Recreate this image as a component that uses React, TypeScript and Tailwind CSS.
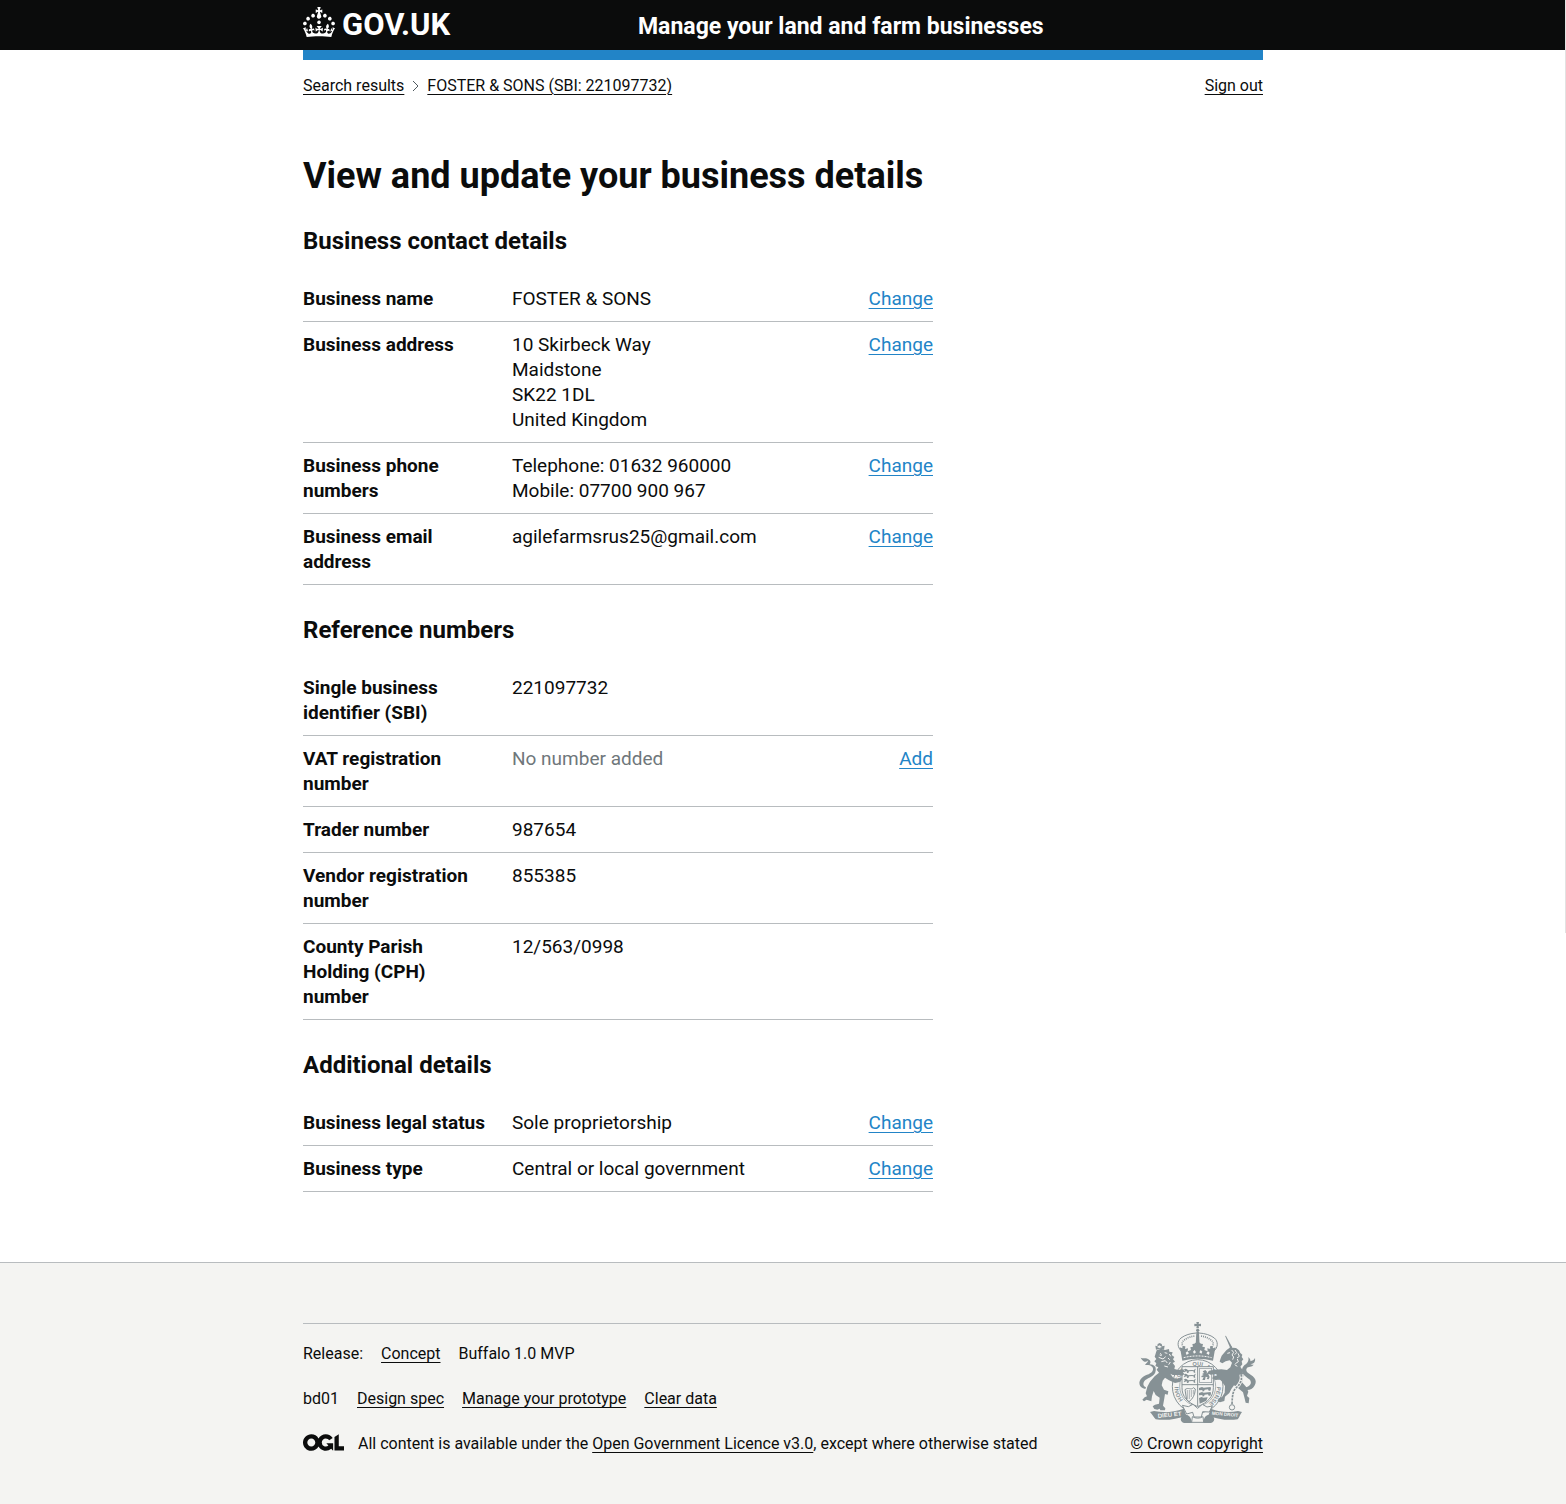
import React from "react";

type Action = "Change" | "Add";
type Row = { label: string; lines: string[]; action?: Action; muted?: boolean };
type Section = { title: string; rows: Row[] };

const sections: Section[] = [
  {
    title: "Business contact details",
    rows: [
      { label: "Business name", lines: ["FOSTER & SONS"], action: "Change" },
      {
        label: "Business address",
        lines: ["10 Skirbeck Way", "Maidstone", "SK22 1DL", "United Kingdom"],
        action: "Change",
      },
      {
        label: "Business phone numbers",
        lines: ["Telephone: 01632 960000", "Mobile: 07700 900 967"],
        action: "Change",
      },
      { label: "Business email address", lines: ["agilefarmsrus25@gmail.com"], action: "Change" },
    ],
  },
  {
    title: "Reference numbers",
    rows: [
      { label: "Single business identifier (SBI)", lines: ["221097732"] },
      { label: "VAT registration number", lines: ["No number added"], action: "Add", muted: true },
      { label: "Trader number", lines: ["987654"] },
      { label: "Vendor registration number", lines: ["855385"] },
      { label: "County Parish Holding (CPH) number", lines: ["12/563/0998"] },
    ],
  },
  {
    title: "Additional details",
    rows: [
      { label: "Business legal status", lines: ["Sole proprietorship"], action: "Change" },
      { label: "Business type", lines: ["Central or local government"], action: "Change" },
    ],
  },
];

const mottoWords = [
  { word: "HONI", offset: "19%" },
  { word: "SOIT", offset: "34%" },
  { word: "QUI", offset: "50%" },
  { word: "MAL Y", offset: "64%" },
  { word: "PENSE", offset: "83%" },
];

function TextLink({ children, label }: { children: React.ReactNode; label?: string }) {
  return (
    <a href="#" aria-label={label} className="underline decoration-1 underline-offset-3 hover:decoration-2">
      {children}
    </a>
  );
}

function Crown() {
  return (
    <svg viewBox="0 0 32 30" className="h-[30px] w-8 shrink-0" fill="currentColor" aria-hidden="true">
      <path d="M22.6 10.4c-1 .4-2-.1-2.4-1-.4-.9.1-2 1-2.4.9-.4 2 .1 2.4 1s-.1 2-1 2.4m-5.9 6.7c-.9.4-2-.1-2.4-1-.4-.9.1-2 1-2.4.9-.4 2 .1 2.4 1s-.1 2-1 2.4m10.8-3.7c-1 .4-2-.1-2.4-1-.4-.9.1-2 1-2.4.9-.4 2 .1 2.4 1s0 2-1 2.4m3.3 4.8c-1 .4-2-.1-2.4-1-.4-.9.1-2 1-2.4.9-.4 2 .1 2.4 1s-.1 2-1 2.4M17 4.7l2.3 1.2V2.5l-2.3.7-.2-.2.9-3h-3.4l.9 3-.2.2c-.1.1-2.3-.7-2.3-.7v3.4L15 4.7c.1.1.1.2.2.2l-1.3 4c-.1.2-.1.4-.1.6 0 1.1.8 2 1.9 2.2h.7c1-.2 1.9-1.1 1.9-2.1 0-.2 0-.4-.1-.6l-1.3-4c-.1-.2 0-.2.1-.3m-7.6 5.7c.9.4 2-.1 2.4-1 .4-.9-.1-2-1-2.4-.9-.4-2 .1-2.4 1s0 2 1 2.4m-5 3c.9.4 2-.1 2.4-1 .4-.9-.1-2-1-2.4-.9-.4-2 .1-2.4 1s.1 2 1 2.4m-3.2 4.8c.9.4 2-.1 2.4-1 .4-.9-.1-2-1-2.4-.9-.4-2 .1-2.4 1s0 2 1 2.4m14.8 11c4.4 0 8.6.3 12.3.8 1.1-4.5 2.4-7 3.7-8.8l-2.5-.9c.2 1.3.3 1.9 0 2.7-.4-.4-.8-1.1-1.1-2.3l-1.2 4c.7-.5 1.3-.8 2-.9-1.1 2.5-2.6 3.1-3.5 3-1.1-.2-1.7-1.2-1.5-2.1.3-1.2 1.5-1.5 2.1-.1 1.1-2.3-.8-3-2-2.3 1.9-1.9 2.1-3.5.6-5.6-2.1 1.6-2.1 3.2-1.2 5.5-1.2-1.4-3.2-.6-2.5 1.6.9-1.4 2.1-.5 1.9.8-.2 1.1-1.7 2.1-3.5 1.9-2.7-.2-2.9-2.1-2.9-3.6.7-.1 1.9.5 2.9 1.9l.4-4.3c-1.1 1.1-2.1 1.4-3.2 1.4.4-1.2 2.1-3 2.1-3h-5.4s1.7 1.9 2.1 3c-1.1 0-2.1-.2-3.2-1.4l.4 4.3c1-1.4 2.2-2 2.9-1.9-.1 1.5-.2 3.4-2.9 3.6-1.9.2-3.4-.8-3.5-1.9-.2-1.3 1-2.2 1.9-.8.7-2.3-1.2-3-2.5-1.6.9-2.2.9-3.9-1.2-5.5-1.5 2-1.3 3.7.6 5.6-1.2-.7-3.1 0-2 2.3.6-1.4 1.8-1.1 2.1.1.2.9-.3 1.9-1.5 2.1-.9.2-2.4-.5-3.5-3 .6 0 1.2.3 2 .9l-1.2-4c-.3 1.1-.7 1.9-1.1 2.3-.3-.8-.2-1.4 0-2.7l-2.9.9C1.3 23 2.6 25.5 3.7 30c3.7-.5 7.9-.8 12.3-.8" />
    </svg>
  );
}

function OglLogo() {
  return (
    <svg viewBox="0 0 483 196" className="h-[17px] w-[41px] shrink-0" fill="currentColor" aria-hidden="true">
      <path d="M421.5 142.8V.1l-50.7 32.3v161.1h112.4v-50.7zm-122.3-9.6A47.12 47.12 0 0 1 221 97.8c0-26 21.1-47.1 47.1-47.1 16.7 0 31.4 8.7 39.7 21.8l42.7-27.2A97.63 97.63 0 0 0 268.1 0c-36.5 0-68.3 20.1-85.1 49.7A98 98 0 0 0 97.8 0C43.9 0 0 43.9 0 97.8s43.9 97.8 97.8 97.8c36.5 0 68.3-20.1 85.1-49.7a97.76 97.76 0 0 0 149.6 25.4l19.4 22.2h3v-87.8h-80l24.3 27.5zM97.8 145c-26 0-47.1-21.1-47.1-47.1s21.1-47.1 47.1-47.1 47.1 21.1 47.1 47.1S123.8 145 97.8 145" />
    </svg>
  );
}

function PassantLions({ x, y }: { x: number; y: number }) {
  return (
    <g transform={`translate(${x} ${y})`}>
      {[0, 15, 30].map((dy) => (
        <path
          key={dy}
          transform={`translate(0 ${dy})`}
          d="M2 4l5-3 5 2 3 3 12-1 6 1 3-5 2 1-2 6 1 5h-5l1-3-5-2-10 1-2 5h-5l2-4-4-1-4 3-3-2 4-3z"
        />
      ))}
    </g>
  );
}

function RoyalArms() {
  return (
    <svg viewBox="39 33 360 309" className="-mt-0.5 h-[103px] w-30" fill="#869195" stroke="none" aria-hidden="true">
      {/* crown */}
      <path d="M217 36h8l-1 6 7-1v8l-7-1 1 7h-8l1-7-7 1v-8l7 1z" />
      <circle cx="221" cy="61" r="5" />
      <path d="M217 66h8l2 42h-12z" />
      <g fill="none" stroke="#869195">
        <path d="M173 124c-14-12-14-30-2-40 12-9 28-14 46-15" strokeWidth="3" />
        <path d="M269 124c14-12 14-30 2-40-12-9-28-14-46-15" strokeWidth="3" />
        <path d="M182 116c-10-9-10-20-1-26 9-7 20-11 32-12" strokeWidth="5" strokeDasharray="3 3" />
        <path d="M260 116c10-9 10-20 1-26-9-7-20-11-32-12" strokeWidth="5" strokeDasharray="3 3" />
      </g>
      <path d="M170 124l-3-12 8 3 2-7 7 1-1 8 9-2-1 9 10-4-2-8 8-2-2-8 6-1 10-7 10 7 6 1-2 8 8 2-2 8 10 4-1-9 9 2-1-8 7-1 2 7 8-3-3 12-5 28c-31-8-61-8-92 0z" />
      <path
        d="M185 128l5-4 5 6-7 5zM207 125l5-5 4 7-6 4zM226 127l4-7 5 5-3 6zM247 130l5-6 5 4-3 7z"
        fill="#f4f4f2"
      />
      <path d="M179 143c28-7 56-7 84 0" fill="none" stroke="#f4f4f2" strokeWidth="3" strokeDasharray="6 3" />

      {/* garter */}
      <ellipse cx="221" cy="229" rx="76" ry="80" fill="#f4f4f2" stroke="#869195" strokeWidth="3" />
      <ellipse cx="221" cy="229" rx="54" ry="58" fill="none" stroke="#869195" strokeWidth="2" />
      <path id="garter-motto" d="M221 291A58 62 0 0 1 221 167A58 62 0 0 1 221 291" fill="none" />
      {mottoWords.map(({ word, offset }) => (
        <text key={word} className="font-['Liberation_Sans'] text-[17px] font-bold" textAnchor="middle">
          <textPath href="#garter-motto" startOffset={offset}>
            {word}
          </textPath>
        </text>
      ))}

      {/* shield */}
      <path
        d="M174 170h94v63c0 27-16 44-47 57-31-13-47-30-47-57z"
        fill="#f4f4f2"
        stroke="#869195"
        strokeWidth="3"
      />
      <path d="M221 170v118M174 224h94" stroke="#869195" strokeWidth="3" />
      <PassantLions x={177} y={175} />
      <g transform="translate(221 230)">
        <path d="M4 4l9-3 5 2 14-1 7-1 1 5-2 6h-5l-2-4-10 1-2 5h-6l2-4-11 1zM4 19l9-3 5 2 14-1 7-1 1 5-2 6h-5l-2-4-10 1-2 5h-6l2-4-11 1zM4 34l8-3 5 2 13-1-4 10-20 9z" />
      </g>
      <rect x="227" y="175" width="36" height="43" fill="none" stroke="#869195" strokeWidth="2" />
      <path d="M236 184l8-4 5 5-1 6 7-7 4 3-6 6 4 8-3 7-6-1 3-5-6-2-2 10h-8l4-9-6 1-1-4 7-3-5-3 6-3z" />
      <path d="M183 239c10-9 18 3 25-6l6 4c-1 18-8 30-19 38l-7-5z" fill="none" stroke="#869195" strokeWidth="3" />
      <path d="M190 240v28M196 240v27M202 240v21M208 240v13" stroke="#869195" strokeWidth="2" />

      {/* lion supporter */}
      <path d="M96 119l-2-12 6 2 1-7 6-3 6 3 2 7 7-2-2 12-12-3z" />
      <path d="M99 111l7-5 8 5-8 3z" fill="#f4f4f2" />
      <path d="M98 121l13-5 12 4 12-3 1 8 10 2-3 8 8 6-4 7 6 7-7 4 7 9-2 9 12 3 15-2 4 8-6 1 5 5-6 5-13-2-16 0-7-4 9 13 14 3 8-5 5 6-8 8-14 3-18-8-12-8-7 9-3 14 7 13 13 5-2 10-8-2-2 13-4 22 7 8-1 6-14 0-2-5-7 3-9-2-5-8 7-5 12-3 2-18-12-8-6-12-5 16-2 15-14-5-8 5-5-5 7-7 7-3-4-9 5-20 8-15 14-16 13-11-7-9 5-7-9-4 3-8-6-6 6-7-5-7z" />
      <path d="M64 237c-20-4-23-23-10-34 12-11 30-10 33-24 2-9-8-16-24-14 3-6 9-7 9-14-3 6-13 8-22-8 11 5 15-2 22 4 10 5 8 12 5 16 14 1 20 8 18 19-2 17-21 20-31 28-8 7-8 19 2 22z" />
      <path
        d="M108 130l5 4M122 128l8 2M104 142l13 5 8-7M112 155l12-3 6 7M132 144l5 5M121 168l11 3M107 135l6 2M136 132l4 7M139 156l-5 8"
        fill="none"
        stroke="#f4f4f2"
        strokeWidth="3"
      />

      {/* unicorn supporter */}
      <path d="M303 77l3 1 18 33-5 4z" />
      <path d="M289 148l4-11 14-16 10-8 3-7 5 7 11 1 9 7 4 8 6 5-2 7 5 7-5 6 2 9-6 7 6 9 3 18-4 20 12 13 7 15-4 13 7 6-2 16-9-2-4-16-4-15-14-12-13-9-8 11-6 12-13 11-2 13-13 4-8-3 4-9 10-4 8-13 1-20-10-14-8-8-11 4-10-5 5-6 9-2-1-5-18 2-8-5 4-7 17-3 20-1 17 2 10-8 5-14-7-7-12 3-10 6-8-5z" />
      <path
        d="M310 130l8-2M333 120l5 8-6 6M342 130l4 9-7 5M340 147l3 8-9 6M323 120l6 7-5 8 5 6-3 8M332 164l8 5"
        fill="none"
        stroke="#f4f4f2"
        strokeWidth="3"
      />
      <path d="M360 233c19-2 26-15 16-25-9-8-24-15-22-28 2-15 13-16 17-24 5-10 1-14 2-14 5 3 7 9 6 12 5-3 12-3 14-10 2 13-5 18-14 18 4 3 7 2 10 2-5 8-17 5-20 10-6 8 1 14 11 20 14 8 20 21 11 34-5 8-13 13-24 12z" />
      <path d="M351 193c5 18-4 31-16 42-8 8-10 20-11 48" fill="none" stroke="#f4f4f2" strokeWidth="10" />
      <path
        d="M351 193c5 18-4 31-16 42-8 8-10 20-11 48"
        fill="none"
        stroke="#869195"
        strokeWidth="5"
        strokeDasharray="7 3"
      />
      <circle cx="324" cy="292" r="8" fill="#f4f4f2" stroke="#869195" strokeWidth="3" />

      {/* compartment and motto scrolls */}
      <path d="M175 286l18 4 14-7 14 12 14-12 14 8 16-3-9 18-20-1-4 16h-22l-4-14-18 5z" fill="#f4f4f2" stroke="#869195" strokeWidth="3" />
      <path d="M173 320c9-9 22-7 27 5l5 14h-24c-9-2-14-10-8-19zM268 320c-9-9-22-7-27 5l-5 14h24c9-2 14-10 8-19z" />
      <path d="M205 320c10 6 22 6 32 0l2 17h-36z" fill="#f4f4f2" stroke="#869195" strokeWidth="3" />
      <path d="M78 306l12-3c31 6 58 3 90-7l7 21c-29 11-61 15-92 11-7-7-9-14-17-22zM354 306l-12-3c-28 5-54 3-82-7l-7 21c29 11 57 15 88 11 7-7 6-14 13-22z" />
      <g fill="#f4f4f2">
        <text x="102" y="324" transform="rotate(-6 102 324)" className="font-['Liberation_Sans'] text-[18px] font-bold">
          DIEU ET
        </text>
        <text x="263" y="314" transform="rotate(5 263 314)" className="font-['Liberation_Sans'] text-[14px] font-bold">
          MON DROIT
        </text>
      </g>
    </svg>
  );
}

function Header() {
  return (
    <header>
      <div className="bg-[#0b0c0c] text-white">
        <div className="mx-auto flex min-h-[50px] max-w-[992px] flex-wrap items-center px-4">
          <a href="#" className="flex w-1/3 min-w-40 items-center gap-[7px] pb-1.5">
            <Crown />
            <span className="pt-1.5 text-[31px] leading-[30px] font-bold">GOV.UK</span>
          </a>
          <a href="#" className="pt-1 pl-[15px] text-[23px] leading-[30px] font-bold">
            Manage your land and farm businesses
          </a>
        </div>
      </div>
      <div className="mx-auto max-w-[992px] px-4">
        <div className="h-2.5 bg-[#2284c7]" />
      </div>
    </header>
  );
}

function SummarySection({ title, rows }: Section) {
  return (
    <section>
      <h2 className="mb-5 text-2xl leading-[30px] font-bold">{title}</h2>
      <dl className="mb-[30px] text-[19px] leading-[25px]">
        {rows.map((row) => (
          <div key={row.label} className="flex border-b border-[#b8bcbf] py-2.5">
            <dt className="mr-5 w-[30%] shrink-0 font-bold">{row.label}</dt>
            <dd className={row.muted ? "flex-1 text-[#6f777b]" : "flex-1"}>
              {row.lines.map((line) => (
                <p key={line}>{line}</p>
              ))}
            </dd>
            {row.action && (
              <dd className="pl-5 text-right text-[#2284c7]">
                <TextLink label={`${row.action} ${row.label}`}>{row.action}</TextLink>
              </dd>
            )}
          </div>
        ))}
      </dl>
    </section>
  );
}

function Footer() {
  return (
    <footer className="border-t border-[#b8bcbf] bg-[#f4f4f2] pt-[60px] pb-[50px] text-base leading-5">
      <div className="mx-auto flex max-w-[992px] flex-wrap items-end gap-[30px] px-4">
        <div className="flex flex-1 flex-col gap-[25px] border-t border-[#b8bcbf] pt-5">
          <ul className="flex flex-wrap gap-x-[18px]">
            <li>Release:</li>
            <li><TextLink>Concept</TextLink></li>
            <li>Buffalo 1.0 MVP</li>
          </ul>
          <ul className="flex flex-wrap gap-x-[18px]">
            <li>bd01</li>
            <li><TextLink>Design spec</TextLink></li>
            <li><TextLink>Manage your prototype</TextLink></li>
            <li><TextLink>Clear data</TextLink></li>
          </ul>
          <div className="flex gap-3.5">
            <OglLogo />
            <p>
              All content is available under the <TextLink>Open Government Licence v3.0</TextLink>, except where
              otherwise stated
            </p>
          </div>
        </div>
        <div className="flex flex-col items-center gap-2.5">
          <RoyalArms />
          <TextLink>© Crown copyright</TextLink>
        </div>
      </div>
    </footer>
  );
}

export default function App() {
  return (
    <div className="relative bg-white font-['Roboto',sans-serif] text-[#0b0c0c]">
      <Header />
      <div className="mx-auto max-w-[992px] px-4">
        <div className="flex justify-between pt-4 text-base leading-5">
          <nav aria-label="Breadcrumb">
            <ol className="flex flex-wrap items-center">
              <li><TextLink>Search results</TextLink></li>
              <li className="flex items-center">
                <svg viewBox="0 0 7 12" className="mx-2 h-3 w-[7px]" fill="none" stroke="#505a5f" aria-hidden="true">
                  <path d="M1 1l5 5-5 5" />
                </svg>
                <TextLink>FOSTER & SONS (SBI: 221097732)</TextLink>
              </li>
            </ol>
          </nav>
          <TextLink>Sign out</TextLink>
        </div>
        <main className="max-w-[630px] pt-[60px] pb-10">
          <h1 className="mb-[30px] text-4xl leading-10 font-bold">View and update your business details</h1>
          {sections.map((section) => (
            <SummarySection key={section.title} {...section} />
          ))}
        </main>
      </div>
      <Footer />
      <div className="absolute top-0 right-0 h-[933px] w-px bg-[#e2e2e2]" />
    </div>
  );
}
